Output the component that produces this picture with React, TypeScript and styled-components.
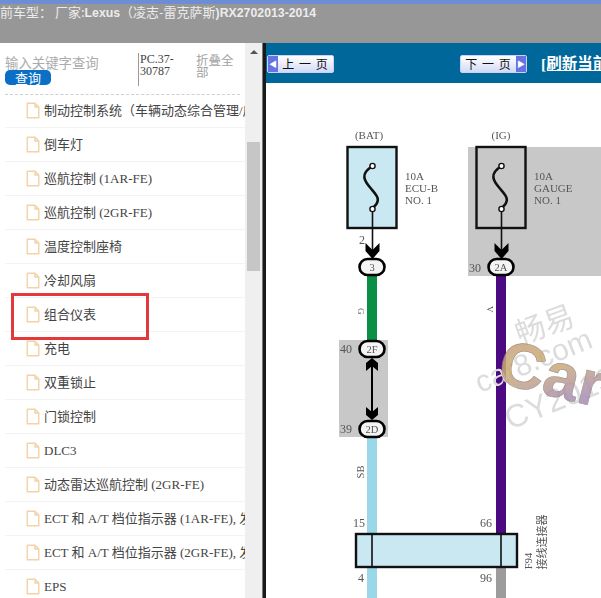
import React from 'react';
import styled, { createGlobalStyle } from 'styled-components';

const GlobalStyle = createGlobalStyle`
  html, body {
    margin: 0;
    padding: 0;
    width: 601px;
    height: 598px;
    overflow: hidden;
    background: #fff;
  }
`;

const Page = styled.div`
  width: 601px;
  height: 598px;
  display: flex;
  flex-direction: column;
  overflow: hidden;
  font-family: 'Noto Sans CJK SC', sans-serif;
`;

const Header = styled.header`
  height: 39px;
  flex: none;
  background: #979797;
  border-top: 4px solid #6d8dd4;
  color: #ececec;
  font: 13px/16px 'Noto Sans CJK SC', sans-serif;
  white-space: pre;
`;

const HeaderLatin = styled.span`
  font: bold 12.3px/16px 'Liberation Sans', Arial, sans-serif;
`;

const Body = styled.div`
  flex: 1;
  min-height: 0;
  display: flex;
`;

const Sidebar = styled.aside`
  position: relative;
  width: 245px;
  flex: none;
  overflow: hidden;
  background: #fff;
`;

const SearchArea = styled.div`
  height: 51px;
  margin-left: 5px;
  width: 235px;
  border-bottom: 1px dashed #cfcfcf;
  display: flex;
  align-items: flex-start;
  box-sizing: content-box;
`;

const SearchBox = styled.div`
  width: 133px;
  flex: none;
  padding-top: 12px;
`;

const Placeholder = styled.div`
  font-size: 13.4px;
  line-height: 15px;
  color: #ababab;
  white-space: nowrap;
`;

const SearchButton = styled.button`
  display: block;
  width: 46px;
  height: 15px;
  padding: 0;
  border: 0;
  border-radius: 5px;
  background: #0b6fc6;
  color: #fff;
  font: 13px/15px 'Noto Sans CJK SC', sans-serif;
`;

const PartCode = styled.div`
  width: 56px;
  height: 33px;
  margin-top: 10px;
  padding-left: 1px;
  flex: none;
  border-left: 1px solid #9a9a9a;
  color: #444;
  font: 12px/12px 'Liberation Serif', serif;
`;

const CollapseAll = styled.div`
  width: 38px;
  margin-top: 11px;
  color: #a2a2a2;
  font-size: 12.5px;
  line-height: 12px;
`;

const List = styled.ul`
  list-style: none;
  margin: -1px 0 0;
  padding: 0 0 0 5px;
`;

const Row = styled.li`
  width: 220px;
  height: 33px;
  padding-left: 21px;
  box-sizing: content-box;
  display: flex;
  align-items: center;
  gap: 4px;
  border-bottom: 1px solid #f3f3f3;
  color: #444;
  font: 13px/17px 'Liberation Serif', 'Noto Sans CJK SC', serif;
  white-space: nowrap;
`;

const FileIcon = styled.svg`
  width: 14px;
  height: 17px;
  flex: none;
`;

const Highlight = styled.div`
  position: absolute;
  left: 11px;
  top: 250px;
  width: 132px;
  height: 41px;
  border: 3px solid #e5383b;
`;

const Scrollbar = styled.div`
  position: relative;
  width: 17px;
  flex: none;
  background: #efefef;
`;

const ScrollArrow = styled.div`
  position: absolute;
  left: 5px;
  top: 7px;
  width: 0;
  height: 0;
  border-left: 4px solid transparent;
  border-right: 4px solid transparent;
  border-bottom: 4px solid #555;
`;

const ScrollThumb = styled.div`
  position: absolute;
  left: 2px;
  top: 99px;
  width: 13px;
  height: 129px;
  background: #c6c6c6;
`;

const Splitter = styled.div`
  width: 4px;
  flex: none;
  background: #1a1a1a;
  border-left: 1px solid #777;
  box-sizing: border-box;
`;

const Main = styled.main`
  flex: 1;
  min-width: 0;
  display: flex;
  flex-direction: column;
  overflow: hidden;
`;

const Toolbar = styled.div`
  height: 40px;
  flex: none;
  background: #00679b;
  display: flex;
  align-items: center;
  padding: 2px 0 0 1px;
  box-sizing: border-box;
  white-space: nowrap;
`;

const PageButton = styled.button<{ $next?: boolean }>`
  width: 67px;
  height: 18px;
  padding: 0;
  flex: none;
  display: flex;
  flex-direction: ${({ $next }) => ($next ? 'row-reverse' : 'row')};
  align-items: stretch;
  border: 1px solid #c9d4f5;
  border-radius: 2px;
  background: linear-gradient(#ffffff, #d3d9f6);
  color: #111;
  font: 12px/16px 'Noto Sans CJK SC', sans-serif;
  margin-left: ${({ $next }) => ($next ? '126px' : '0')};
`;

const ButtonCap = styled.span`
  width: 10px;
  flex: none;
  background: #6673e0;
  color: #fff;
  font-size: 8px;
  line-height: 16px;
  text-align: center;
`;

const ButtonLabel = styled.span`
  flex: 1;
  text-align: center;
  letter-spacing: 1px;
  white-space: pre;
`;

const RefreshLink = styled.a`
  margin-left: 14px;
  color: #fff;
  font: bold 15.5px/18px 'Liberation Serif', 'Noto Sans CJK SC', serif;
  text-decoration: underline;
`;

const Diagram = styled.svg`
  display: block;
  width: 335px;
  height: 515px;
  flex: none;
  background: #fff;
`;

const Label = styled.text<{ $size?: number }>`
  font-family: 'Liberation Serif', 'Noto Sans CJK SC', serif;
  font-size: ${({ $size }) => $size ?? 11}px;
  fill: #555;
`;

const Mark = styled.text<{ $size: number }>`
  font-family: 'Liberation Sans', 'Noto Sans CJK SC', sans-serif;
  font-size: ${({ $size }) => $size}px;
  fill: #dcdcdc;
`;

const CarLogo = styled.text`
  font-family: 'Liberation Sans', sans-serif;
  font-weight: bold;
  font-size: 64px;
  fill: url(#carFill);
  stroke: #8f8178;
  stroke-width: 0.6px;
  opacity: 0.85;
`;

const Blurred = styled.g`
  filter: blur(0.4px);
`;

const items = [
  '制动控制系统（车辆动态综合管理/启动',
  '倒车灯',
  '巡航控制 (1AR-FE)',
  '巡航控制 (2GR-FE)',
  '温度控制座椅',
  '冷却风扇',
  '组合仪表',
  '充电',
  '双重锁止',
  '门锁控制',
  'DLC3',
  '动态雷达巡航控制 (2GR-FE)',
  'ECT 和 A/T 档位指示器 (1AR-FE), 发动机',
  'ECT 和 A/T 档位指示器 (2GR-FE), 发动机',
  'EPS',
];

const File = () => (
  <FileIcon viewBox="0 0 14 17">
    <path
      d="M1.2 1.2H9L12.8 5V15.8H1.2Z M9 1.2V5H12.8"
      fill="#fff"
      stroke="#f3d2a6"
      strokeWidth="1.4"
      strokeLinejoin="round"
    />
  </FileIcon>
);

const Connector = ({ x, y, label }: { x: number; y: number; label: string }) => (
  <g>
    <rect x={x - 12.5} y={y - 8} width={25} height={16} rx={8} fill="#f4f4f4" stroke="#000" strokeWidth={2.6} />
    <Label x={x} y={y + 4} textAnchor="middle" $size={10.5}>{label}</Label>
  </g>
);

const Fuse = ({ x, fill }: { x: number; fill: string }) => {
  const cx = x + 25;
  return (
    <g>
      <rect x={x} y={147} width={49} height={81} fill={fill} stroke="#111" strokeWidth={2.4} />
      <path
        d={`M${cx} 166 C${cx - 13} 174 ${cx - 8} 181 ${cx - 2} 188 C${cx + 4} 195 ${cx + 10} 200 ${cx} 208`}
        fill="none"
        stroke="#111"
        strokeWidth={2.6}
      />
      <circle cx={cx} cy={166} r={2.6} fill="#fff" stroke="#111" strokeWidth={1.4} />
      <circle cx={cx} cy={209} r={2.6} fill="#fff" stroke="#111" strokeWidth={1.4} />
      <path d={`M${cx} 212V252`} stroke="#111" strokeWidth={1.6} />
      <path d={`M${cx - 7} 243L${cx} 250L${cx + 7} 243V251L${cx} 259L${cx - 7} 251Z`} fill="#000" />
    </g>
  );
};

const WiringDiagram = () => (
  <Diagram viewBox="266 83 335 515">
    <defs>
      <linearGradient id="carFill" x1="0" y1="0" x2="1" y2="1">
        <stop offset="0" stopColor="#c29a86" />
        <stop offset="0.35" stopColor="#cfae72" />
        <stop offset="0.65" stopColor="#a98fb2" />
        <stop offset="1" stopColor="#8f88b8" />
      </linearGradient>
    </defs>
    <Blurred>
      <rect x={468} y={147} width={133} height={129} fill="#c8c8c8" />
      <rect x={339} y={340} width={49} height={97} fill="#c8c8c8" />

      <rect x={367} y={276} width={10} height={64} fill="#0b8f45" />
      <rect x={367} y={437} width={10} height={161} fill="#98d8e8" />
      <rect x={496} y={276} width={10} height={257} fill="#4b0a82" />
      <rect x={496} y={567} width={10} height={31} fill="#9c9c9c" />

      <Label x={369} y={139} textAnchor="middle">(BAT)</Label>
      <Label x={501} y={139} textAnchor="middle">(IG)</Label>

      <Fuse x={347.5} fill="#c9e8f2" />
      <Fuse x={476.5} fill="#c8c8c8" />

      <Label x={405} y={180}>10A</Label>
      <Label x={405} y={192}>ECU-B</Label>
      <Label x={405} y={204}>NO. 1</Label>
      <Label x={534} y={180}>10A</Label>
      <Label x={534} y={192}>GAUGE</Label>
      <Label x={534} y={204}>NO. 1</Label>

      <Label x={359} y={244} $size={12}>2</Label>
      <Label x={469} y={272} $size={12}>30</Label>

      <Connector x={372} y={267} label="3" />
      <Connector x={501} y={267} label="2A" />

      <Label x={0} y={0} $size={9} transform="translate(358 308) rotate(90)">G</Label>
      <Label x={0} y={0} $size={9} transform="translate(487 306) rotate(90)">V</Label>

      <Label x={340} y={353} $size={12}>40</Label>
      <Label x={340} y={433} $size={12}>39</Label>
      <path d="M372 362V416" stroke="#000" strokeWidth={2} />
      <path d="M372 358L378 363V371L372 366L366 371V363Z" fill="#000" />
      <path d="M372 420L378 415V407L372 412L366 407V415Z" fill="#000" />
      <Connector x={372} y={349} label="2F" />
      <Connector x={372} y={429} label="2D" />

      <Label x={0} y={0} $size={10.5} transform="translate(364 472) rotate(-90)" textAnchor="middle">SB</Label>

      <Label x={359} y={527} textAnchor="middle" $size={12}>15</Label>
      <Label x={486} y={527} textAnchor="middle" $size={12}>66</Label>
      <Label x={361} y={582} textAnchor="middle" $size={12}>4</Label>
      <Label x={486} y={582} textAnchor="middle" $size={12}>96</Label>

      <rect x={356} y={534} width={161} height={33} fill="#c9e8f2" stroke="#111" strokeWidth={2.4} />
      <path d="M372 534V567M501 534V567" stroke="#111" strokeWidth={1.6} />

      <Label x={0} y={0} $size={10.5} transform="translate(532 561) rotate(-90)" textAnchor="middle">F94</Label>
      <Label x={0} y={0} $size={11} transform="translate(546 542) rotate(-90)" textAnchor="middle">接线连接器</Label>

      <Mark $size={30} x={0} y={0} transform="translate(520 345) rotate(-20)">畅易</Mark>
      <Mark $size={30} x={0} y={0} transform="translate(480 393) rotate(-22)">car8.com</Mark>
      <Mark $size={32} x={0} y={0} transform="translate(510 430) rotate(-22)">CY2013</Mark>
      <CarLogo x={0} y={0} transform="translate(495 382) rotate(14)">Car3</CarLogo>
    </Blurred>
  </Diagram>
);

const App: React.FC = () => (
  <Page>
    <GlobalStyle />
    <Header>
      {'前车型： 厂家:'}
      <HeaderLatin>Lexus</HeaderLatin>
      {'（凌志-雷克萨斯'}
      <HeaderLatin>)RX2702013-2014</HeaderLatin>
    </Header>
    <Body>
      <Sidebar>
        <SearchArea>
          <SearchBox>
            <Placeholder>输入关键字查询</Placeholder>
            <SearchButton>查询</SearchButton>
          </SearchBox>
          <PartCode>PC.37-30787</PartCode>
          <CollapseAll>折叠全部</CollapseAll>
        </SearchArea>
        <List>
          {items.map((item) => (
            <Row key={item}>
              <File />
              {item}
            </Row>
          ))}
        </List>
        <Highlight />
      </Sidebar>
      <Scrollbar>
        <ScrollArrow />
        <ScrollThumb />
      </Scrollbar>
      <Splitter />
      <Main>
        <Toolbar>
          <PageButton>
            <ButtonCap>◀</ButtonCap>
            <ButtonLabel>{'上 一 页'}</ButtonLabel>
          </PageButton>
          <PageButton $next>
            <ButtonCap>▶</ButtonCap>
            <ButtonLabel>{'下 一 页'}</ButtonLabel>
          </PageButton>
          <RefreshLink>[刷新当前页面]</RefreshLink>
        </Toolbar>
        <WiringDiagram />
      </Main>
    </Body>
  </Page>
);

export default App;
